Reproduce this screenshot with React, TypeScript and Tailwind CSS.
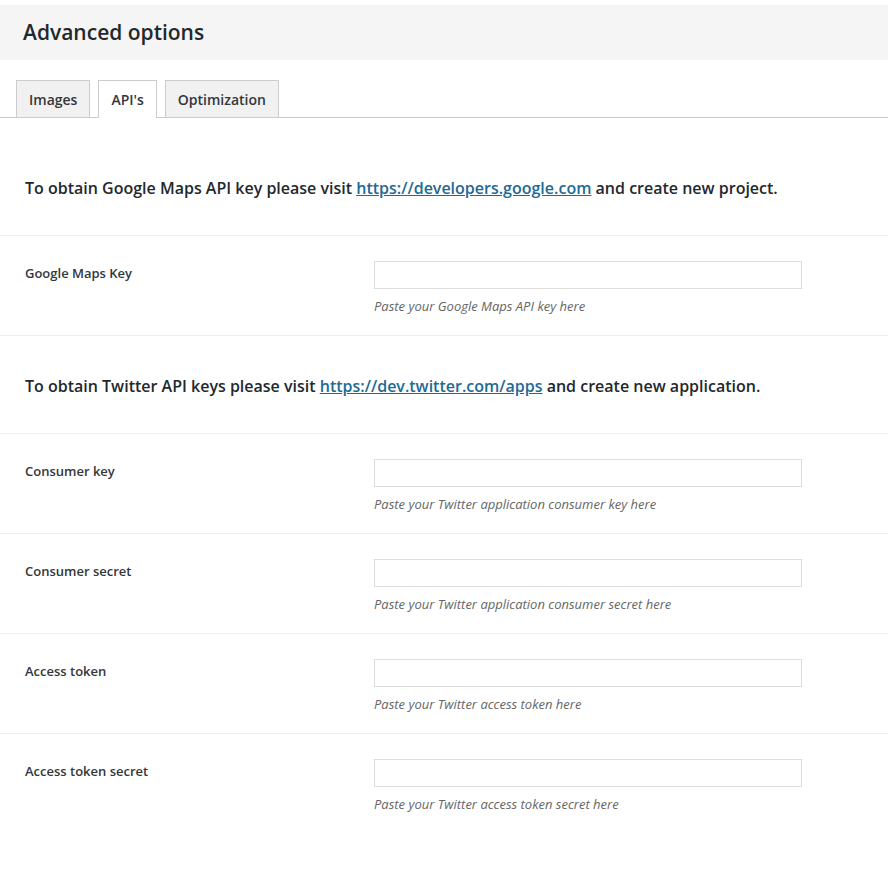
import React from 'react';

const rows = [
    { label: 'Consumer key', hint: 'Paste your Twitter application consumer key here' },
    { label: 'Consumer secret', hint: 'Paste your Twitter application consumer secret here' },
    { label: 'Access token', hint: 'Paste your Twitter access token here' },
    { label: 'Access token secret', hint: 'Paste your Twitter access token secret here' },
];

const Field: React.FC<{ label: string; hint: string }> = ({ label, hint }) => (
    <div className="flex h-[100px] border-t border-[#eeeeee]">
        <div className="w-[374px] pl-[25px] pt-[28px] text-[13px] font-semibold text-[#32373c]">{label}</div>
        <div className="pt-[25px]">
            <input
                type="text"
                className="block w-[428px] h-[28px] border border-[#dddddd] bg-white outline-none"
            />
            <p className="mt-[8px] text-[13px] italic text-[#666666]">{hint}</p>
        </div>
    </div>
);

const App: React.FC = () => {
    return (
        <div className="w-[888px] h-[870px] bg-white font-['Open_Sans',sans-serif] text-[#23282d]">
            {/* Header */}
            <div className="pt-[5px]">
                <div className="h-[55px] bg-[#f5f5f5] flex items-center px-[23px]">
                    <h1 className="text-[21px] font-semibold">Advanced options</h1>
                </div>
            </div>

            {/* Tabs */}
            <div className="mt-[20px] flex items-end gap-[8px] pl-[16px] border-b border-[#cccccc] h-[38px]">
                <div className="h-[37px] px-[12px] flex items-center bg-[#f1f1f1] border border-b-0 border-[#cccccc] text-[14px] font-semibold text-[#32373c]">Images</div>
                <div className="h-[38px] -mb-px px-[12px] flex items-center bg-white border border-b-0 border-[#cccccc] text-[14px] font-semibold text-[#32373c]">API's</div>
                <div className="h-[37px] px-[12px] flex items-center bg-[#f1f1f1] border border-b-0 border-[#cccccc] text-[14px] font-semibold text-[#32373c]">Optimization</div>
            </div>

            {/* Google section */}
            <div className="h-[117px] pl-[25px] pt-[58px]">
                <p className="text-[16px] font-semibold">
                    To obtain Google Maps API key please visit{' '}
                    <a href="#" className="text-[#1e6a94] underline">https://developers.google.com</a> and create new project.
                </p>
            </div>
            <Field label="Google Maps Key" hint="Paste your Google Maps API key here" />

            {/* Twitter section */}
            <div className="h-[98px] pl-[25px] pt-[38px] border-t border-[#eeeeee]">
                <p className="text-[16px] font-semibold">
                    To obtain Twitter API keys please visit{' '}
                    <a href="#" className="text-[#1e6a94] underline">https://dev.twitter.com/apps</a> and create new application.
                </p>
            </div>
            {rows.map((r) => (
                <Field key={r.label} label={r.label} hint={r.hint} />
            ))}
        </div>
    );
};

export default App;
